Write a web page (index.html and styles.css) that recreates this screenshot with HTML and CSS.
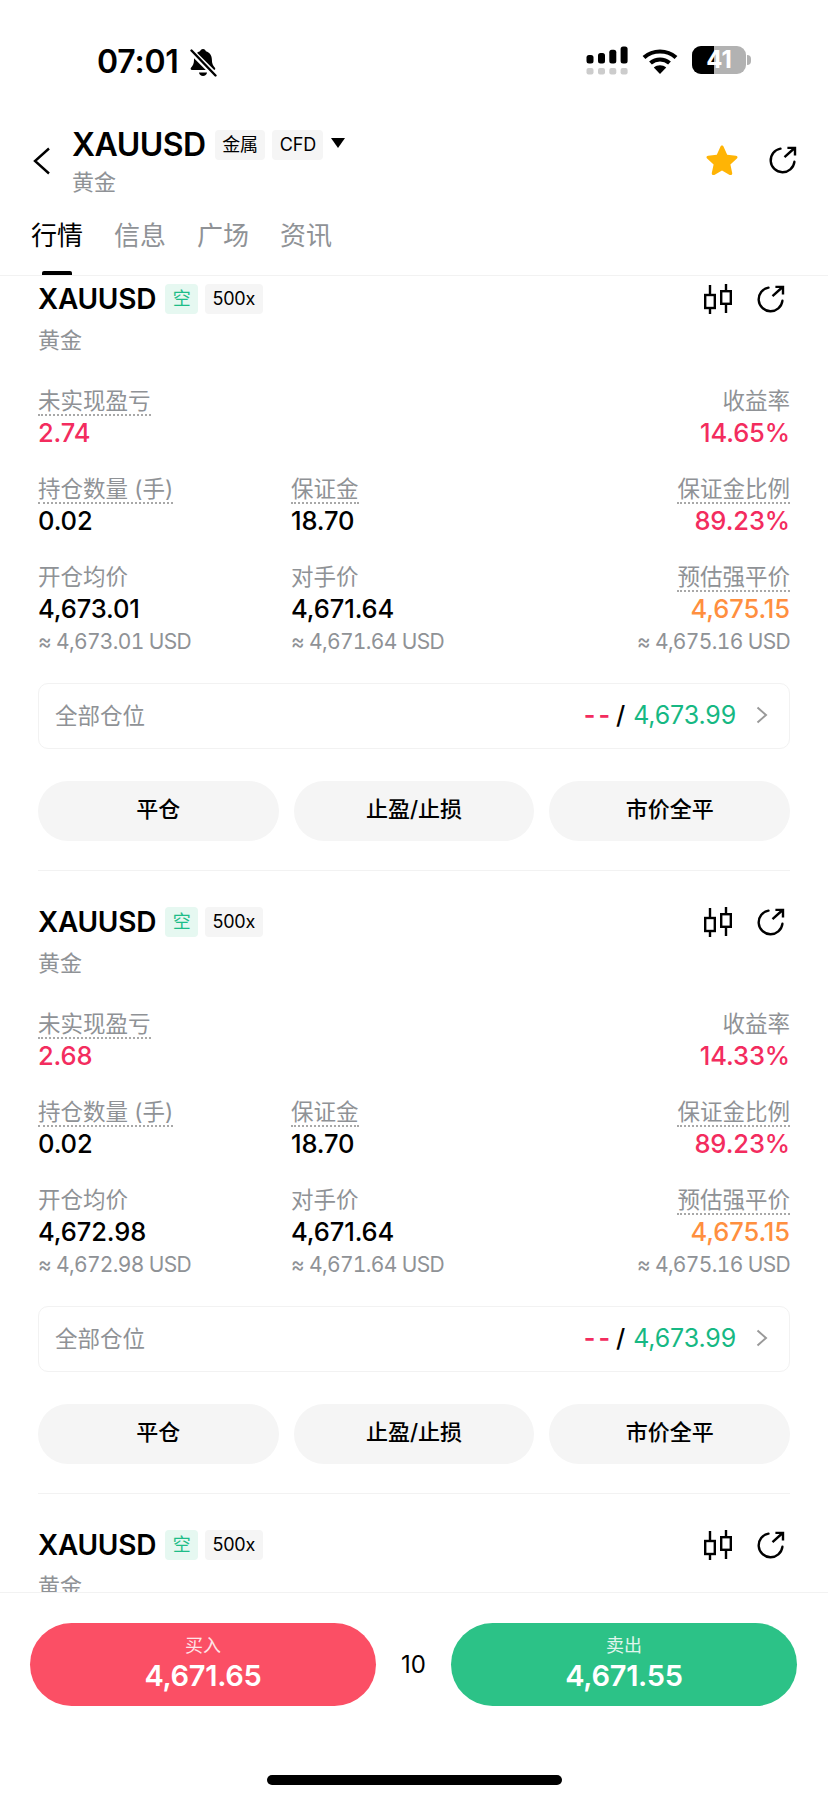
FILE: index.html
```html
<!doctype html>
<html>
<head>
    <meta charset="utf-8" />
    <title>XAUUSD</title>
    <link rel="stylesheet" href="styles.css">
</head>

<body>
    <svg class="defs" width="0" height="0">
        <symbol id="i-share" viewBox="0 0 28 28">
            <path d="M11.5 2.6A11.9 11.9 0 1 0 25.4 15.8" fill="none" stroke="currentColor" stroke-width="2.4" stroke-linecap="round"/>
            <path d="M15.5 11.2L25.6 2M18.4 1.9H26V9.4" fill="none" stroke="currentColor" stroke-width="2.4"/>
        </symbol>
        <symbol id="i-candle" viewBox="0 0 28 30">
            <path d="M6 1V30M22 0V29" fill="none" stroke="currentColor" stroke-width="2.4"/>
            <rect x="1.2" y="11" width="9.6" height="13" fill="#fff" stroke="currentColor" stroke-width="2.4"/>
            <rect x="17.2" y="7.2" width="9.6" height="12.6" fill="#fff" stroke="currentColor" stroke-width="2.4"/>
        </symbol>
    </svg>

    <div id="app">
        <div id="status">
            <div class="status-left">
                <span class="clock">07:01</span>
                <svg class="bell" width="28" height="29" viewBox="0 0 28 29">
                    <path d="M14 1c1.6 0 2.6 1 2.9 2.3 3.7 1 6 4.2 6 8.4 0 3.6.9 5.800 3 8 .8.9.3 2.300-1 2.300H3c-1.300 0-1.800-1.400-1-2.300 2.100-2.200 3-4.400 3-8 0-4.200 2.300-7.400 6-8.400C11.400 2 12.400 1 14 1z"/>
                    <path d="M10 24.500h8c-.3 2.200-1.900 3.500-4 3.500s-3.700-1.300-4-3.500z"/>
                    <path d="M1 2l26 26" stroke="#fff" stroke-width="6"/>
                    <path d="M2.500 2.500l24 25" stroke="#000" stroke-width="2.400" stroke-linecap="round"/>
                </svg>
            </div>
            <div class="status-right">
                <svg class="signal" width="42" height="29" viewBox="0 0 42 29">
                    <rect x="0.500" y="9" width="7" height="8.500" rx="2.500"/>
                    <rect x="12" y="7" width="7" height="10.500" rx="2.500"/>
                    <rect x="23.300" y="3.800" width="7" height="13.700" rx="2.500"/>
                    <rect x="34.600" y="0.500" width="7" height="17" rx="2.500"/>
                    <g fill="#ccc">
                        <rect x="0.500" y="22" width="7" height="6.500" rx="2"/>
                        <rect x="12" y="22" width="7" height="6.500" rx="2"/>
                        <rect x="23.300" y="22" width="7" height="6.500" rx="2"/>
                        <rect x="34.600" y="22" width="7" height="6.500" rx="2"/>
                    </g>
                </svg>
                <svg class="wifi" width="36" height="26" viewBox="0 0 36 26">
                    <path d="M2 9.500C11 1.500 25 1.500 34 9.500" fill="none" stroke="#000" stroke-width="4.200"/>
                    <path d="M8.500 15C14 10.300 22 10.300 27.500 15" fill="none" stroke="#000" stroke-width="4.200"/>
                    <path d="M18 26l-6.200-6.600c3.600-2.800 8.800-2.800 12.400 0z"/>
                </svg>
                <div class="battery">
                    <div class="battery-body">
                        <div class="battery-level"></div>
                        <span class="battery-text">41</span>
                    </div>
                    <div class="battery-nub"></div>
                </div>
            </div>
        </div>

        <div id="header">
            <svg class="back" width="18" height="28" viewBox="0 0 18 28">
                <path d="M16 1.500L2 14l14 12.500" fill="none" stroke="#000" stroke-width="2.400"/>
            </svg>
            <div class="header-main">
                <div class="header-title">
                    <span class="symbol-big">XAUUSD</span>
                    <span class="tag tag-big">金属</span>
                    <span class="tag tag-big">CFD</span>
                    <span class="caret"></span>
                </div>
                <div class="sub">黄金</div>
            </div>
            <div class="header-icons">
                <svg class="star" width="32" height="30" viewBox="0 0 32 30">
                    <path d="M16 .5c.8 0 1.300.5 1.600 1.200l3.600 8 8.700 1c1.600.2 2.100 1.800 1 2.800l-6.500 6 1.800 8.600c.3 1.500-1.200 2.500-2.500 1.800L16 25.500 8.300 29.900c-1.300.7-2.800-.3-2.500-1.800l1.800-8.600-6.500-6c-1.100-1-.6-2.600 1-2.800l8.700-1 3.600-8C14.700 1 15.200.5 16 .5z"/>
                </svg>
                <svg class="icon" width="28" height="28"><use href="#i-share"/></svg>
            </div>
        </div>

        <div id="tabs">
            <div class="tab active">行情</div>
            <div class="tab">信息</div>
            <div class="tab">广场</div>
            <div class="tab">资讯</div>
        </div>

        <div id="list">
            <div class="list-inner">
                <div class="card">
                    <div class="card-head">
                        <span class="symbol">XAUUSD</span>
                        <span class="tag tag-short">空</span>
                        <span class="tag">500x</span>
                        <div class="card-icons">
                            <svg class="icon" width="28" height="30"><use href="#i-candle"/></svg>
                            <svg class="icon" width="28" height="28"><use href="#i-share"/></svg>
                        </div>
                    </div>
                    <div class="sub">黄金</div>
                    <div class="fields">
                        <div class="field">
                            <span class="label dotted">未实现盈亏</span>
                            <div class="value red">2.74</div>
                        </div>
                        <div class="field right col-3">
                            <span class="label">收益率</span>
                            <div class="value red">14.65%</div>
                        </div>
                        <div class="field">
                            <span class="label dotted">持仓数量 (手)</span>
                            <div class="value">0.02</div>
                        </div>
                        <div class="field">
                            <span class="label dotted">保证金</span>
                            <div class="value">18.70</div>
                        </div>
                        <div class="field right">
                            <span class="label dotted">保证金比例</span>
                            <div class="value red">89.23%</div>
                        </div>
                        <div class="field">
                            <span class="label">开仓均价</span>
                            <div class="value">4,673.01</div>
                            <div class="approx">≈ 4,673.01 USD</div>
                        </div>
                        <div class="field">
                            <span class="label">对手价</span>
                            <div class="value">4,671.64</div>
                            <div class="approx">≈ 4,671.64 USD</div>
                        </div>
                        <div class="field right">
                            <span class="label dotted">预估强平价</span>
                            <div class="value orange">4,675.15</div>
                            <div class="approx">≈ 4,675.16 USD</div>
                        </div>
                    </div>
                    <div class="summary">
                        <span class="summary-label">全部仓位</span>
                        <div class="summary-right">
                            <span class="red dashes">--</span>
                            <span class="slash">/</span>
                            <span class="green">4,673.99</span>
                            <svg class="chev" width="12" height="18" viewBox="0 0 12 18">
                                <path d="M1.500 1.500L10 9l-8.500 7.500" fill="none" stroke="#999" stroke-width="2"/>
                            </svg>
                        </div>
                    </div>
                    <div class="actions">
                        <div class="action">平仓</div>
                        <div class="action">止盈/止损</div>
                        <div class="action">市价全平</div>
                    </div>
                </div>

                <div class="card">
                    <div class="card-head">
                        <span class="symbol">XAUUSD</span>
                        <span class="tag tag-short">空</span>
                        <span class="tag">500x</span>
                        <div class="card-icons">
                            <svg class="icon" width="28" height="30"><use href="#i-candle"/></svg>
                            <svg class="icon" width="28" height="28"><use href="#i-share"/></svg>
                        </div>
                    </div>
                    <div class="sub">黄金</div>
                    <div class="fields">
                        <div class="field">
                            <span class="label dotted">未实现盈亏</span>
                            <div class="value red">2.68</div>
                        </div>
                        <div class="field right col-3">
                            <span class="label">收益率</span>
                            <div class="value red">14.33%</div>
                        </div>
                        <div class="field">
                            <span class="label dotted">持仓数量 (手)</span>
                            <div class="value">0.02</div>
                        </div>
                        <div class="field">
                            <span class="label dotted">保证金</span>
                            <div class="value">18.70</div>
                        </div>
                        <div class="field right">
                            <span class="label dotted">保证金比例</span>
                            <div class="value red">89.23%</div>
                        </div>
                        <div class="field">
                            <span class="label">开仓均价</span>
                            <div class="value">4,672.98</div>
                            <div class="approx">≈ 4,672.98 USD</div>
                        </div>
                        <div class="field">
                            <span class="label">对手价</span>
                            <div class="value">4,671.64</div>
                            <div class="approx">≈ 4,671.64 USD</div>
                        </div>
                        <div class="field right">
                            <span class="label dotted">预估强平价</span>
                            <div class="value orange">4,675.15</div>
                            <div class="approx">≈ 4,675.16 USD</div>
                        </div>
                    </div>
                    <div class="summary">
                        <span class="summary-label">全部仓位</span>
                        <div class="summary-right">
                            <span class="red dashes">--</span>
                            <span class="slash">/</span>
                            <span class="green">4,673.99</span>
                            <svg class="chev" width="12" height="18" viewBox="0 0 12 18">
                                <path d="M1.500 1.500L10 9l-8.500 7.500" fill="none" stroke="#999" stroke-width="2"/>
                            </svg>
                        </div>
                    </div>
                    <div class="actions">
                        <div class="action">平仓</div>
                        <div class="action">止盈/止损</div>
                        <div class="action">市价全平</div>
                    </div>
                </div>

                <div class="card">
                    <div class="card-head">
                        <span class="symbol">XAUUSD</span>
                        <span class="tag tag-short">空</span>
                        <span class="tag">500x</span>
                        <div class="card-icons">
                            <svg class="icon" width="28" height="30"><use href="#i-candle"/></svg>
                            <svg class="icon" width="28" height="28"><use href="#i-share"/></svg>
                        </div>
                    </div>
                    <div class="sub">黄金</div>
                </div>
            </div>
        </div>

        <div id="trade">
            <div class="trade-row">
                <div class="trade-btn buy">
                    <div class="trade-label">买入</div>
                    <div class="trade-price">4,671.65</div>
                </div>
                <div class="spread">10</div>
                <div class="trade-btn sell">
                    <div class="trade-label">卖出</div>
                    <div class="trade-price">4,671.55</div>
                </div>
            </div>
            <div class="home-bar"></div>
        </div>
    </div>
</body>

</html>
```

FILE: styles.css
```css
:root {
    --gray: #8f9296;
    --red: #f32c5e;
    --orange: #ff8f3f;
    --green: #16b883;
    --soft: #f5f5f5;
    --line: #f2f2f2;
}
html, body {
    margin: 0;
    background-color: #fff;
}
body {
    color: #000;
    font-family: Inter, "Noto Sans CJK SC", sans-serif;
}
.defs {
    position: absolute;
}

#app {
    height: 1800px;
    display: flex;
    flex-direction: column;
    overflow: hidden;
}

/* status bar */
#status {
    height: 46px;
    padding: 47px 77px 0 97px;
    display: flex;
    justify-content: space-between;
    align-items: flex-start;
}
.status-left {
    display: flex;
    align-items: center;
    gap: 10px;
}
    .clock {
        font-size: 32px;
        line-height: 30px;
        font-weight: 600;
        letter-spacing: -0.2px;
    }
    .bell {
        display: block;
    }
.status-right {
    display: flex;
    align-items: flex-start;
    gap: 14px;
    margin-top: -1px;
}
    .wifi {
        margin-top: 2px;
    }
    .battery {
        display: flex;
        align-items: center;
        gap: 1px;
    }
    .battery-body {
        position: relative;
        width: 54px;
        height: 28px;
        border-radius: 9px;
        background: #b2b2b2;
        overflow: hidden;
        display: flex;
        align-items: center;
        justify-content: center;
    }
    .battery-level {
        position: absolute;
        left: 0;
        top: 0;
        bottom: 0;
        width: 22px;
        background: #000;
    }
    .battery-text {
        position: relative;
        color: #fff;
        font-size: 24px;
        font-weight: 700;
        line-height: 28px;
    }
    .battery-nub {
        width: 4px;
        height: 10px;
        border-radius: 0 4px 4px 0;
        background: #b2b2b2;
    }

/* header */
#header {
    height: 94px;
    padding: 36px 31px 0 33px;
    display: flex;
    align-items: flex-start;
}
    .back {
        margin: 18px 21px 0 0;
        flex: none;
    }
    .header-main {
        flex: 1;
    }
    .header-title {
        display: flex;
        align-items: center;
        height: 32px;
    }
    .symbol-big {
        font-size: 32px;
        line-height: 32px;
        font-weight: 600;
        letter-spacing: -0.5px;
        margin-right: 9px;
    }
    .tag-big {
        margin-right: 8px;
    }
    .caret {
        margin-left: 1px;
        margin-bottom: 4px;
        border-left: 7px solid transparent;
        border-right: 7px solid transparent;
        border-top: 10px solid #000;
    }
    .header-main .sub {
        margin-top: 6px;
    }
    .header-icons {
        display: flex;
        align-items: center;
        gap: 31px;
        padding-top: 16px;
    }
        .star {
            fill: #ffb405;
        }

/* tabs */
#tabs {
    height: 52px;
    padding: 0 31px;
    display: flex;
    gap: 31px;
    border-bottom: 1px solid var(--line);
    flex: none;
}
.tab {
    position: relative;
    font-size: 26px;
    line-height: 36px;
    margin-top: -5px;
    color: var(--gray);
}
.tab.active {
    color: #000;
}
.tab.active::after {
    content: "";
    position: absolute;
    left: 11px;
    bottom: 0;
    width: 30px;
    height: 4px;
    border-radius: 2px 2px 0 0;
    background: #000;
}

/* positions */
#list {
    flex: 1;
    min-height: 0;
    overflow: hidden;
}
.list-inner {
    margin-top: -28px;
}
.card {
    margin: 0 38px;
    padding: 36px 0 29px;
    border-bottom: 1px solid var(--line);
}
.card:last-child {
    border-bottom: 0;
}
.card-head {
    display: flex;
    align-items: center;
    height: 30px;
}
    .symbol {
        font-size: 28px;
        line-height: 30px;
        font-weight: 600;
        letter-spacing: -0.25px;
        margin-right: 9px;
    }
    .tag {
        height: 30px;
        padding: 0 7.500px;
        margin-right: 7px;
        border-radius: 4px;
        background: var(--soft);
        font-size: 18px;
        line-height: 30px;
        letter-spacing: -0.2px;
    }
    .tag-short {
        background: #e6f8f1;
        color: #1dbd88;
    }
    .card-icons {
        margin-left: auto;
        margin-right: 5px;
        display: flex;
        align-items: center;
        gap: 25px;
    }
.icon {
    display: block;
    color: #000;
}
.sub {
    font-size: 22px;
    line-height: 30px;
    color: var(--gray);
}
.card > .sub {
    margin-top: 11px;
}

.fields {
    margin-top: 32px;
    display: grid;
    grid-template-columns: 253px 1fr auto;
    row-gap: 27px;
}
.field.right {
    text-align: right;
}
.col-3 {
    grid-column: 3;
}
.label {
    display: inline-block;
    height: 31px;
    font-size: 22.500px;
    line-height: 28px;
    color: var(--gray);
}
.label.dotted {
    border-bottom: 2px dotted #a8a8a8;
    height: 27px;
    margin-bottom: 2px;
}
.value {
    font-size: 25.500px;
    line-height: 30px;
    font-weight: 500;
    letter-spacing: -0.1px;
}
.approx {
    margin-top: 4px;
    font-size: 21px;
    line-height: 28px;
    font-variant-numeric: tabular-nums;
    letter-spacing: -0.65px;
    color: var(--gray);
}
.red {
    color: var(--red);
}
.orange {
    color: var(--orange);
}
.green {
    color: var(--green);
}

.summary {
    margin-top: 27px;
    height: 62px;
    padding: 0 21px 2px 16px;
    border: 1.5px solid var(--line);
    border-radius: 10px;
    display: flex;
    align-items: center;
    justify-content: space-between;
}
    .summary-label {
        font-size: 22.500px;
        margin-bottom: 2px;
        color: var(--gray);
    }
    .summary-right {
        display: flex;
        align-items: center;
        font-size: 25px;
        letter-spacing: -0.15px;
    }
    .dashes {
        font-weight: 600;
        letter-spacing: 3px;
    }
    .slash {
        margin: 0 8px 0 3px;
        font-weight: 500;
    }
    .chev {
        margin-left: 20px;
    }

.actions {
    margin-top: 32px;
    display: flex;
    gap: 15px;
}
.action {
    flex: 1;
    height: 60px;
    border-radius: 30px;
    background: var(--soft);
    font-size: 22px;
    font-weight: 500;
    line-height: 57px;
    text-align: center;
}

/* bottom bar */
#trade {
    height: 207px;
    border-top: 1px solid var(--line);
    background: #fff;
    flex: none;
    display: flex;
    flex-direction: column;
    position: relative;
}
.trade-row {
    margin-top: 30px;
    padding: 0 31px 0 30px;
    display: flex;
    align-items: center;
}
.trade-btn {
    flex: 1;
    height: 83px;
    border-radius: 42px;
    color: #fff;
    text-align: center;
}
.buy {
    background: #fb4f65;
}
.sell {
    background: #2cc287;
}
.trade-label {
    margin-top: 10px;
    font-size: 18px;
    line-height: 26px;
    opacity: 0.85;
}
.trade-price {
    font-size: 29px;
    line-height: 34px;
    font-weight: 600;
    letter-spacing: -0.3px;
}
.spread {
    width: 75px;
    text-align: center;
    font-size: 24px;
}
.home-bar {
    margin: 69px auto 0;
    width: 295px;
    height: 10px;
    border-radius: 5px;
    background: #000;
}
```
